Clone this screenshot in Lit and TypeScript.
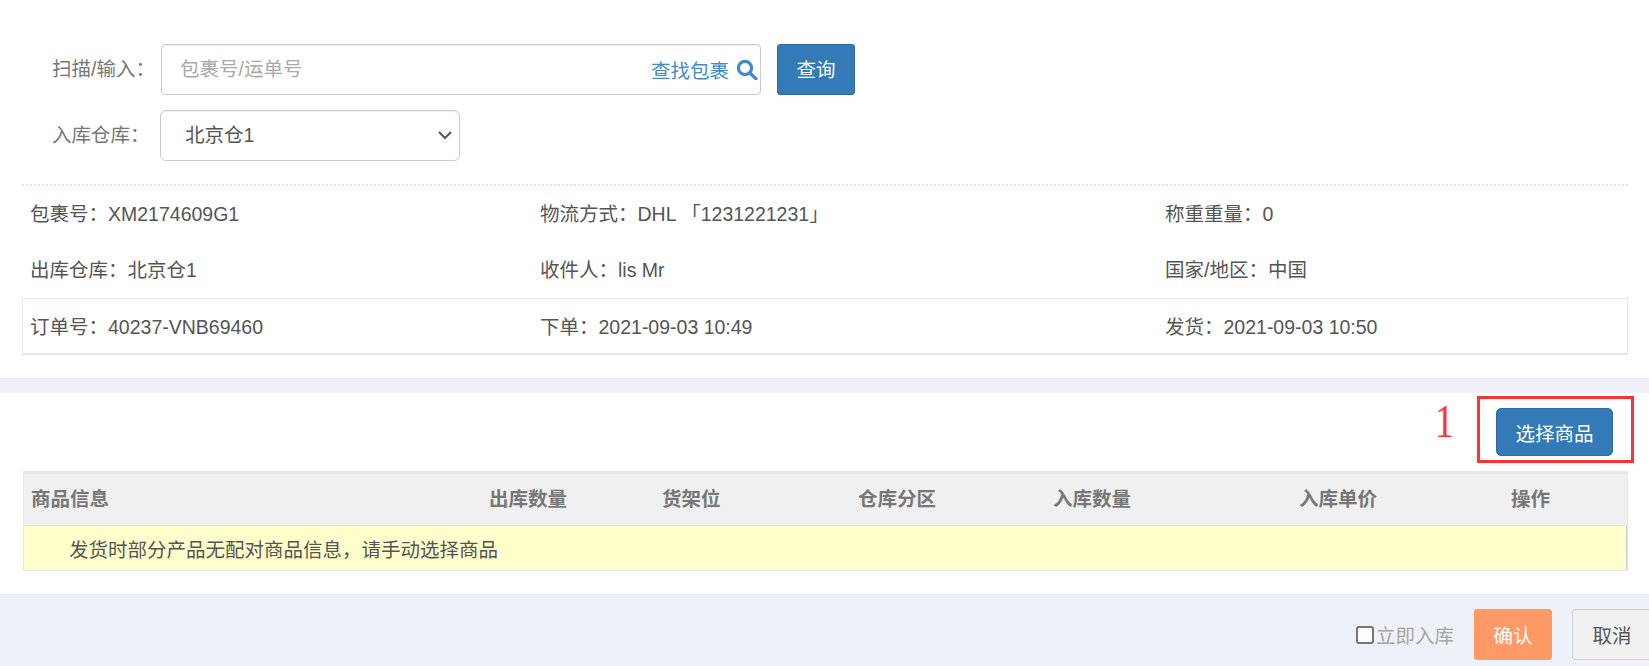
import { LitElement, html, css } from "lit";
import { customElement } from "lit/decorators.js";

const HEAD: string[] = ["商品信息", "出库数量", "货架位", "仓库分区", "入库数量", "入库单价", "操作"];
const INFO: string[][] = [
  ["包裹号：XM2174609G1", "物流方式：DHL 「1231221231」", "称重重量：0"],
  ["出库仓库：北京仓1", "收件人：lis Mr", "国家/地区：中国"],
];
const ORDER: string[] = ["订单号：40237-VNB69460", "下单：2021-09-03 10:49", "发货：2021-09-03 10:50"];

@customElement("app-root")
export class AppRoot extends LitElement {
  static styles = css`
    :host {
      display: block;
      width: 1649px;
      height: 666px;
      overflow: hidden;
      background: #eef1f8;
      font-family: "Liberation Sans", "Noto Sans CJK SC", sans-serif;
      font-size: 19.5px;
      color: #555;
    }
    * { box-sizing: border-box; }
    .top {
      height: 378px;
      background: #fff;
      padding: 44px 21px 0 22px;
      box-shadow: 0 1px 2px rgba(0, 0, 0, 0.03);
    }
    .form-row {
      display: flex;
      align-items: center;
      height: 51px;
    }
    .form-row + .form-row { margin-top: 15px; }
    .label {
      width: 139px;
      padding: 0 0 4px 30px;
      color: #777;
      flex: none;
    }
    .search {
      position: relative;
      width: 600px;
      height: 51px;
    }
    .search input {
      width: 100%;
      height: 100%;
      border: 1px solid #ccc;
      border-radius: 4px;
      padding: 0 120px 0 18px;
      font: inherit;
      color: #555;
      outline: none;
      box-shadow: inset 0 1px 1px rgba(0, 0, 0, 0.075);
    }
    .search input::placeholder { color: #a9a9a9; }
    .find {
      position: absolute;
      right: 3px;
      top: 0;
      height: 100%;
      display: flex;
      align-items: center;
      gap: 7px;
      color: #428bca;
    }
    .btn {
      height: 51px;
      border-radius: 3px;
      font: inherit;
      display: flex;
      align-items: center;
      justify-content: center;
      padding: 0;
    }
    .primary {
      color: #fff;
      background: #337ab7;
      border: 1px solid #2e6da4;
    }
    .query { width: 78px; margin-left: 16px; padding-bottom: 2px; }
    .select-wrap {
      position: relative;
      width: 300px;
      height: 51px;
      margin-left: -1px;
    }
    .select {
      appearance: none;
      display: block;
      width: 100%;
      height: 100%;
      border: 1px solid #ccc;
      border-radius: 6px;
      background-color: #fff;
      font: inherit;
      color: #555;
      padding: 0 30px 2px 24px;
      outline: none;
      box-shadow: inset 0 1px 1px rgba(0, 0, 0, 0.075);
    }
    .chev {
      position: absolute;
      right: 8px;
      top: 21px;
      pointer-events: none;
    }
    .info {
      margin-top: 23px;
      border-top: 2px dotted #e4e4e4;
    }
    .row {
      display: grid;
      grid-template-columns: 510px 625px 1fr;
      height: 56px;
      align-items: center;
      padding: 0 0 4px 8px;
      white-space: nowrap;
    }
    .row.order {
      height: 57px;
      border: 1px solid #e7e7e7;
      border-bottom-width: 2px;
      padding: 0 0 2px 7px;
    }
    .bottom {
      height: 201px;
      margin-top: 15px;
      background: #fff;
      padding: 3px 15px 0 23px;
      box-shadow: 0 1px 2px rgba(0, 0, 0, 0.03);
    }
    .tools {
      display: flex;
      justify-content: flex-end;
      align-items: flex-start;
      height: 75px;
    }
    .mark {
      font-family: "Liberation Serif", serif;
      font-size: 47px;
      line-height: 48px;
      color: #ff3333;
      margin: 1px 19px 0 0;
      transform: scaleX(0.8);
      transform-origin: left center;
    }
    .redbox {
      width: 157px;
      height: 67px;
      border: 3px solid #ff3333;
      padding: 9px 19px 0 16px;
    }
    .redbox .btn { width: 117px; height: 48px; border-radius: 5px; }
    .table {
      width: 1605px;
      border: 1px solid #e7e7e7;
      border-top-width: 3px;
    }
    .thead {
      display: grid;
      grid-template-columns: 458px 173px 196px 195px 246px 212px 1fr;
      height: 52px;
      align-items: center;
      background: #f0f0f0;
      font-weight: 700;
      color: #777;
      border-bottom: 1px solid #e4e4e4;
      padding: 0 0 4px 7px;
      white-space: nowrap;
    }
    .tbody {
      height: 44px;
      display: flex;
      align-items: center;
      background: #ffffcc;
      padding-left: 45px;
      border-right: 1px solid #ccc;
    }
    .foot {
      display: flex;
      justify-content: flex-end;
      align-items: center;
      padding-top: 15px;
      margin-right: -3px;
    }
    .check {
      display: flex;
      align-items: center;
      color: #a5a5a5;
      margin-right: 20px;
    }
    .check input {
      appearance: none;
      width: 18px;
      height: 18px;
      margin: 0 2px 0 0;
      border: 2px solid #767676;
      border-radius: 3px;
      background: #fff;
    }
    .confirm {
      width: 78px;
      color: #fff;
      background: #ff9966;
      border: none;
    }
    .cancel {
      width: 80px;
      margin-left: 20px;
      background: #f1f1f1;
      border: 1px solid #d2d2d2;
      color: #555;
    }
  `;

  render() {
    return html`
      <section class="top">
        <div class="form-row">
          <label class="label">扫描/输入：</label>
          <div class="search">
            <input placeholder="包裹号/运单号" />
            <span class="find">查找包裹
              <svg width="22" height="21" viewBox="0 0 22 21" fill="none" stroke="#428bca" stroke-width="3.2">
                <circle cx="9" cy="9" r="6.6"></circle>
                <path d="M14 14l6 6" stroke-linecap="round"></path>
              </svg>
            </span>
          </div>
          <button class="btn primary query">查询</button>
        </div>
        <div class="form-row">
          <label class="label">入库仓库：</label>
          <div class="select-wrap">
            <select class="select"><option>北京仓1</option></select>
            <svg class="chev" width="14" height="9" viewBox="0 0 14 9" fill="none" stroke="#555" stroke-width="2">
              <path d="M1 1l6 6 6-6"></path>
            </svg>
          </div>
        </div>
        <div class="info">
          ${INFO.map((r) => html`<div class="row">${r.map((c) => html`<span>${c}</span>`)}</div>`)}
          <div class="row order">${ORDER.map((c) => html`<span>${c}</span>`)}</div>
        </div>
      </section>
      <section class="bottom">
        <div class="tools">
          <span class="mark">1</span>
          <div class="redbox"><button class="btn primary">选择商品</button></div>
        </div>
        <div class="table">
          <div class="thead">${HEAD.map((h) => html`<span>${h}</span>`)}</div>
          <div class="tbody">发货时部分产品无配对商品信息，请手动选择商品</div>
        </div>
      </section>
      <footer class="foot">
        <label class="check"><input type="checkbox" />立即入库</label>
        <button class="btn confirm">确认</button>
        <button class="btn cancel">取消</button>
      </footer>
    `;
  }
}
